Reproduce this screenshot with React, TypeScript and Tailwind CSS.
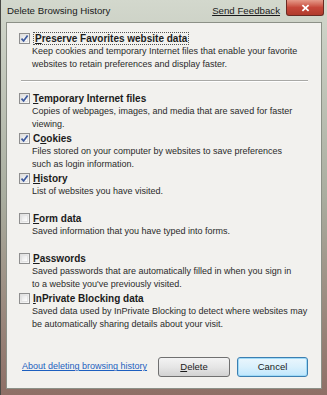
import React from "react";

const FONT = { fontFamily: '"Liberation Sans", Arial, sans-serif' };

function Check({ checked }: { checked?: boolean }) {
  return (
    <span className="relative flex h-[11px] w-[11px] shrink-0 items-center justify-center border border-[#8f8f8f] bg-gradient-to-br from-[#dcdcdc] to-[#fbfbfb]">
      <span className="absolute inset-[1px] border border-[#e4e4e4] bg-gradient-to-br from-[#e6e6e6] to-[#ffffff]" />
      {checked && (
        <svg viewBox="0 0 9 9" className="relative h-[9px] w-[9px]">
          <path d="M1.5 4.6 L3.6 6.9 L7.6 1.6" fill="none" stroke="#3d5a9e" strokeWidth="1.7" />
        </svg>
      )}
    </span>
  );
}

type Item = {
  label: string;
  key: number;
  desc: string[];
  checked?: boolean;
};

const items: Item[] = [
  {
    label: "Temporary Internet files",
    key: 0,
    checked: true,
    desc: ["Copies of webpages, images, and media that are saved for faster", "viewing."],
  },
  {
    label: "Cookies",
    key: 1,
    checked: true,
    desc: ["Files stored on your computer by websites to save preferences", "such as login information."],
  },
  { label: "History", key: 0, checked: true, desc: ["List of websites you have visited."] },
  { label: "Form data", key: 0, desc: ["Saved information that you have typed into forms."] },
  {
    label: "Passwords",
    key: 0,
    desc: ["Saved passwords that are automatically filled in when you sign in", "to a website you've previously visited."],
  },
  {
    label: "InPrivate Blocking data",
    key: 0,
    desc: ["Saved data used by InPrivate Blocking to detect where websites may", "be automatically sharing details about your visit."],
  },
];

function Mnemonic({ text, at }: { text: string; at: number }) {
  return (
    <>
      {text.slice(0, at)}
      <span className="underline">{text[at]}</span>
      {text.slice(at + 1)}
    </>
  );
}

function Option({ item }: { item: Item }) {
  return (
    <div className="h-[40px]">
      <div className="flex h-[13px] items-center gap-[3px]">
        <Check checked={item.checked} />
        <span className="whitespace-nowrap text-[10px] font-bold leading-[13px] text-[#1b1b1b]">
          <Mnemonic text={item.label} at={item.key} />
        </span>
      </div>
      <div className="whitespace-nowrap pl-[13px] text-[9px] leading-[12.5px] text-[#2a2a2a]">
        {item.desc.map((d) => (
          <div key={d}>{d}</div>
        ))}
      </div>
    </div>
  );
}

export default function App() {
  return (
    <div
      className="relative flex h-[395px] w-[327px] flex-col overflow-hidden border-l border-[#4a4a46] bg-gradient-to-b from-[#d3d8cd] via-[#a9ad9f] to-[#8e6f66]"
      style={FONT}
    >
      <div className="flex h-[22px] shrink-0 items-center pl-[6px] pr-[3px] text-[9.7px] text-[#1a1a1a]">
        <span className="flex-1">Delete Browsing History</span>
        <span className="mr-[6px] underline">Send Feedback</span>
        <span className="mb-[6px] flex h-[16px] w-[38px] items-center justify-center self-start rounded-b-[3px] border border-t-0 border-[#6b2a22] bg-gradient-to-b from-[#e59a8a] via-[#c6473a] to-[#b03b2c]">
          <svg viewBox="0 0 10 9" className="h-[8px] w-[9px]">
            <path d="M1.5 1.2 L8.5 7.8 M8.5 1.2 L1.5 7.8" stroke="#ffffff" strokeWidth="2" />
          </svg>
        </span>
      </div>

      <div className="mr-[5px] ml-[5px] flex h-[367px] flex-col border border-[#8c9087] bg-[#f2f1ee] pt-[9px] pl-[12px] pr-[13px]">
        <div className="flex h-[13px] items-center gap-[3px]">
          <Check checked />
          <span className="whitespace-nowrap border border-dotted border-[#555] px-[1px] text-[10px] font-bold leading-[11px] text-[#1b1b1b]">
            <Mnemonic text="Preserve Favorites website data" at={0} />
          </span>
        </div>
        <div className="whitespace-nowrap pl-[13px] text-[9px] leading-[12.5px] text-[#2a2a2a]">
          <div>Keep cookies and temporary Internet files that enable your favorite</div>
          <div>websites to retain preferences and display faster.</div>
        </div>

        <div className="mt-[10px] mb-[10px] ml-[2px] h-[2px] border-t border-b border-t-[#a9a9a6] border-b-white" />

        {items.map((it) => (
          <Option key={it.label} item={it} />
        ))}

        <div className="mt-auto mb-[11px] flex items-center">
          <span className="ml-[3px] flex-1 text-[9px] text-[#1d5fbf] underline">
            About deleting browsing history
          </span>
          <button className="h-[20px] w-[72px] rounded-[3px] border border-[#707070] bg-gradient-to-b from-[#f3f3f3] via-[#e6e6e6] to-[#d2d2d2] text-[9.5px] text-[#1b1b1b]">
            <Mnemonic text="Delete" at={0} />
          </button>
          <button className="ml-[7px] h-[20px] w-[71px] rounded-[3px] border border-[#3c7fb1] bg-gradient-to-b from-[#eaf6fd] via-[#d9f0fc] to-[#bee6fd] text-[9.5px] text-[#1b1b1b] shadow-[inset_0_0_0_1px_#9fdaf7]">
            Cancel
          </button>
        </div>
      </div>
    </div>
  );
}
